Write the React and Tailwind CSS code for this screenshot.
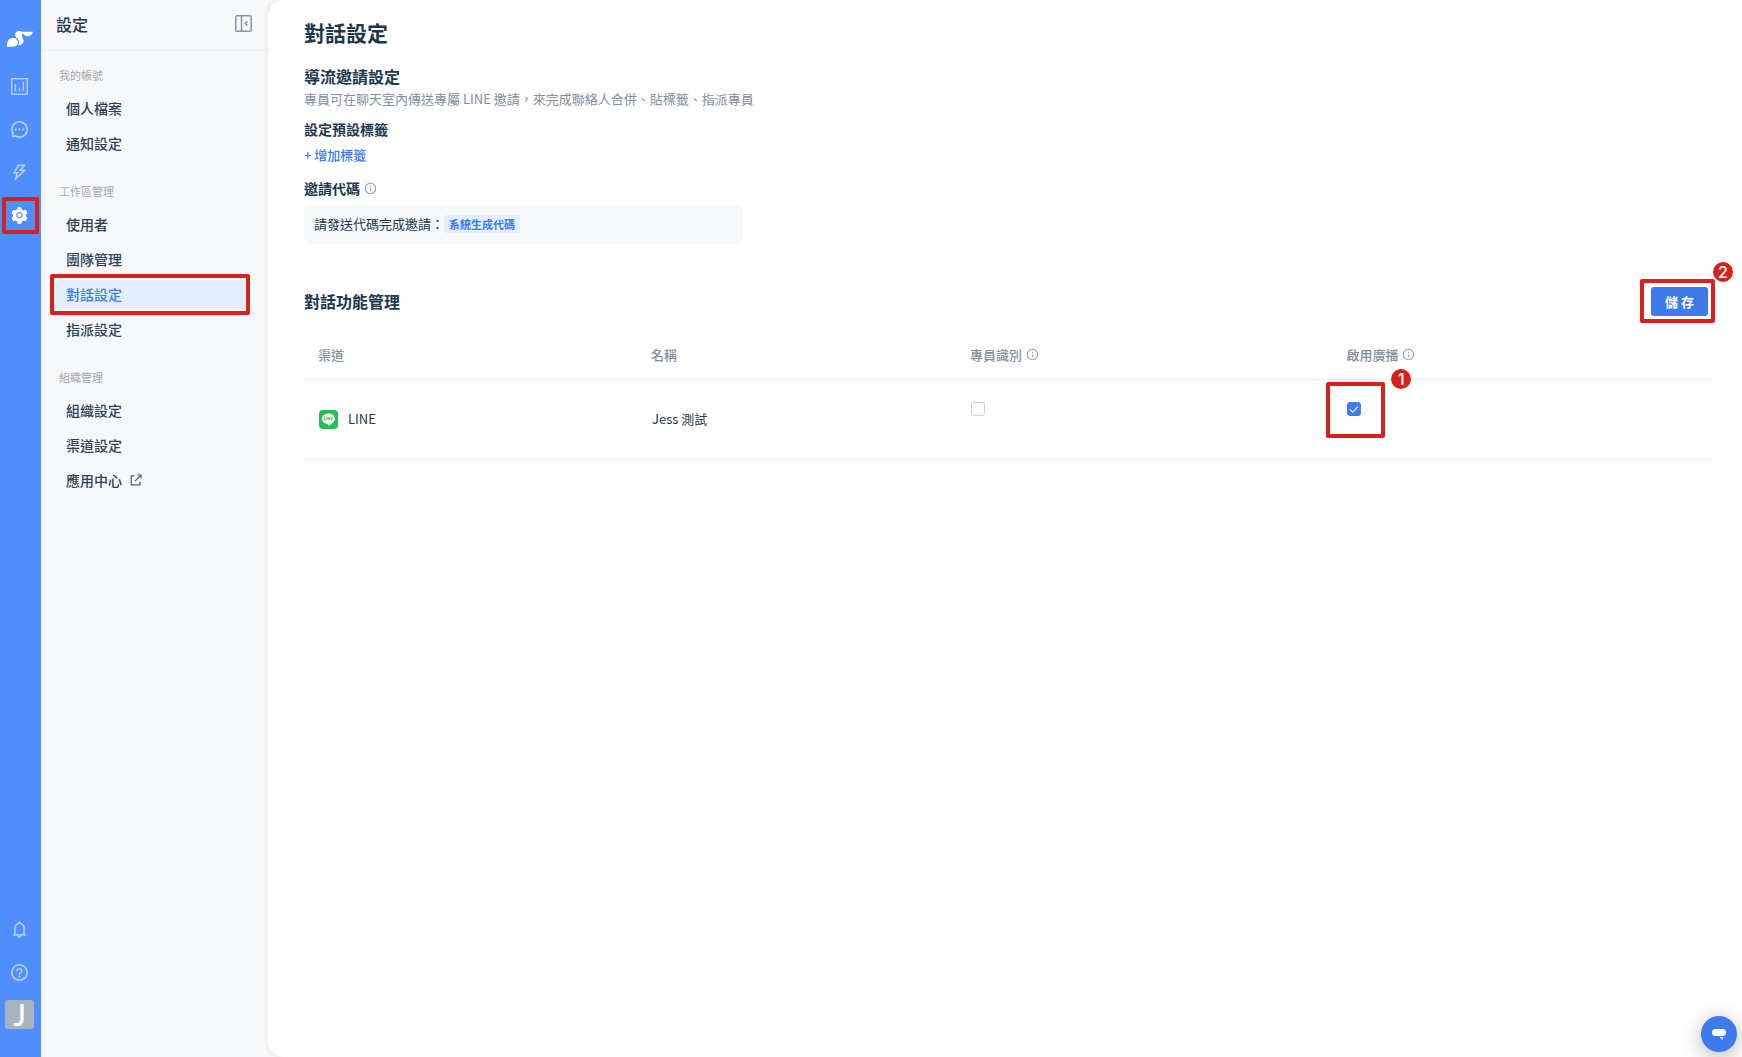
import { useState } from "react";
import {
  AiOutlineMessage,
  AiOutlineThunderbolt,
  AiFillSetting,
  AiOutlineBell,
  AiOutlineQuestionCircle,
  AiOutlineInfoCircle,
} from "react-icons/ai";

const navGroups = [
  {
    label: "我的帳號",
    items: [{ label: "個人檔案" }, { label: "通知設定" }],
  },
  {
    label: "工作區管理",
    items: [
      { label: "使用者" },
      { label: "團隊管理" },
      { label: "對話設定", active: true },
      { label: "指派設定" },
    ],
  },
  {
    label: "組織管理",
    items: [
      { label: "組織設定" },
      { label: "渠道設定" },
      { label: "應用中心", external: true },
    ],
  },
];

function PelicanLogo() {
  return (
    <svg width="26" height="16" viewBox="0 0 78 48" fill="white" aria-hidden="true">
      <path d="M0 47C-1 32 5 21 18 20C27 20 33 28 33 35C32 43 24 47 14 47Z" />
      <path d="M25 14C23 5 30 0 37 0C42 0 46 2 48 4C46 8 44 12 45 17C46 21 50 25 50 31C49 38 43 43 33 43C37 36 37 28 32 23C28 20 26 18 25 14Z" />
      <path d="M46 2.500L78 2.500C76 11 69 16 61 16C53 15 47 10 46 2.500Z" />
    </svg>
  );
}

function ChartIcon() {
  return (
    <svg width="17" height="17" viewBox="0 0 16 16" fill="none" stroke="currentColor" strokeWidth="1.3" aria-hidden="true">
      <rect x="0.7" y="0.7" width="14.6" height="14.6" />
      <path d="M4.2 5.800v6.600M8 9.200v3.200M11.700 3.600v8.800" />
    </svg>
  );
}

function CollapseIcon() {
  return (
    <svg width="17" height="17" viewBox="0 0 17 17" fill="none" stroke="#8696a7" strokeWidth="1.5" aria-hidden="true">
      <rect x="0.8" y="0.8" width="15.4" height="15.4" rx="1" />
      <path d="M6.5 1v15" />
      <path d="M12.4 6.3L10.2 8.5L12.4 10.7" strokeWidth="1.7" />
    </svg>
  );
}

function ExternalIcon() {
  return (
    <svg width="12" height="12" viewBox="0 0 12 12" fill="none" stroke="#4b5e72" strokeWidth="1.2" className="mb-0.5" aria-hidden="true">
      <path d="M4.6 1.9H1.3v8.9h8.6V7.4" />
      <path d="M5 7.2L10.6 1.4M7.4 1h3.6v3.6" />
    </svg>
  );
}

function LineLogo() {
  return (
    <svg width="19" height="19" viewBox="0 0 38 38" aria-hidden="true">
      <rect width="38" height="38" rx="8" fill="#22bf54" />
      <path
        fill="white"
        d="M19 7C11.800 7 6 11.700 6 17.500C6 22.700 10.600 27 16.800 27.900C18.300 28.200 18 29.300 17.800 31.500C19 32 32 24.800 32 17.500C32 11.700 26.200 7 19 7Z"
      />
      <path d="M11 14.500V20H13.500M15.500 14.500V20M18 20V14.500L21.500 20V14.500M27 14.500H24.200V20H27M24.200 17.200H26.600" fill="none" stroke="#22bf54" strokeWidth="1.500" />
    </svg>
  );
}

function RailButton({ label, children }) {
  return (
    <button type="button" aria-label={label} className="flex h-[43px] w-full items-center justify-center text-[#b3d3ff]">
      {children}
    </button>
  );
}

function Marker({ children, className }) {
  return (
    <span
      className={`absolute flex size-5 items-center justify-center rounded-full bg-[#d6221b] font-['Inter',sans-serif] text-base leading-5 font-medium text-white ${className}`}
    >
      {children}
    </span>
  );
}

function Check({ label, defaultChecked }) {
  const [checked, setChecked] = useState(defaultChecked);
  return (
    <span className="relative block size-[14px]">
      <input
        type="checkbox"
        aria-label={label}
        checked={checked}
        onChange={(e) => setChecked(e.target.checked)}
        className="block size-[14px] appearance-none rounded-[3px] border border-[#d0d0d0] bg-white checked:border-[#3e7aea] checked:bg-[#3e7aea]"
      />
      {checked && (
        <svg className="pointer-events-none absolute inset-0" width="14" height="14" viewBox="0 0 14 14" fill="none" stroke="white" strokeWidth="1.1" aria-hidden="true">
          <path d="M2.800 7.400L5.700 10.300L11 4.700" />
        </svg>
      )}
    </span>
  );
}

function Rail() {
  return (
    <nav aria-label="主選單" className="flex w-[41px] shrink-0 flex-col bg-[#508ffb] pr-0.5">
      <div className="flex h-[65px] items-center justify-center pt-3">
        <PelicanLogo />
      </div>
      <RailButton label="報表"><ChartIcon /></RailButton>
      <RailButton label="聊天"><AiOutlineMessage size={19} strokeWidth={16} /></RailButton>
      <RailButton label="自動化"><AiOutlineThunderbolt size={19} strokeWidth={16} /></RailButton>
      <div className="relative">
        <RailButton label="設定"><AiFillSetting size={19} color="white" /></RailButton>
        <span className="pointer-events-none absolute inset-y-[3px] right-0 left-0.5 rounded-[2px] border-4 border-[#d6221b]" />
      </div>
      <div className="mt-auto pb-7">
        <RailButton label="通知"><AiOutlineBell size={19} strokeWidth={16} /></RailButton>
        <RailButton label="說明"><AiOutlineQuestionCircle size={19} strokeWidth={16} /></RailButton>
        <button type="button" aria-label="帳號" className="mx-auto mt-1.5 flex size-[29px] items-center justify-center rounded-[3px] bg-[#a6b4c0] font-['Lato',sans-serif] text-[30px] leading-[29px] font-medium text-white">
          J
        </button>
      </div>
    </nav>
  );
}

function Sidebar() {
  return (
    <aside className="w-[227px] shrink-0">
      <div className="flex h-[49px] items-center justify-between pr-4 pb-1 pl-[15px] pt-0.5 shadow-[0_1px_3px_rgba(0,0,0,0.05)]">
        <h2 className="text-base leading-6 font-medium">設定</h2>
        <button type="button" aria-label="收合側欄"><CollapseIcon /></button>
      </div>
      <div className="flex flex-col gap-6 pt-[17px] pr-5 pl-[15px]">
        {navGroups.map((group) => (
          <section key={group.label}>
            <h3 className="pl-[3px] text-[11px] leading-[18px] text-[#a5a8ab]">{group.label}</h3>
            <ul className="mt-2.5 flex flex-col gap-1.5">
              {group.items.map((item) => (
                <li key={item.label} className="relative">
                  <a
                    href="#"
                    className={`flex h-[29px] items-center gap-2 rounded-sm pl-2.5 text-[14px] font-medium ${
                      item.active ? "bg-[#e3effe] text-[#3e7aea]" : "text-[#2c4258]"
                    }`}
                  >
                    {item.label}
                    {item.external && <ExternalIcon />}
                  </a>
                  {item.active && (
                    <span className="pointer-events-none absolute -inset-y-1.5 -right-0.5 -left-1.5 rounded-[2px] border-4 border-[#d6221b]" />
                  )}
                </li>
              ))}
            </ul>
          </section>
        ))}
      </div>
    </aside>
  );
}

function InfoLabel({ children }) {
  return (
    <span className="flex items-center gap-1">
      {children}
      <AiOutlineInfoCircle size={13} color="#8696a7" />
    </span>
  );
}

export default function App() {
  return (
    <div className="flex min-h-screen bg-[#f7f8fa] font-['Noto_Sans_CJK_TC',sans-serif] text-[#21374d]">
      <Rail />
      <Sidebar />
      <main className="min-w-0 flex-1 rounded-l-2xl bg-white pr-[33px] pl-9 shadow-[-1px_0_5px_rgba(0,0,0,0.06)]">
        <h1 className="pt-4 text-[21px] leading-8 font-bold">對話設定</h1>

        <section className="mt-4">
          <h2 className="text-base leading-6 font-bold">導流邀請設定</h2>
          <p className="text-[13px] leading-[22px] text-[#7e8fa0]">
            專員可在聊天室內傳送專屬 LINE 邀請，來完成聯絡人合併、貼標籤、指派專員
          </p>
          <h3 className="mt-2 text-[14px] leading-[22px] font-bold">設定預設標籤</h3>
          <button type="button" className="mt-1 block text-[13px] leading-[22px] font-medium text-[#3e7aea]">
            + 增加標籤
          </button>
          <h3 className="mt-[11px] text-[14px] leading-[22px] font-bold">
            <InfoLabel>邀請代碼</InfoLabel>
          </h3>
          <div className="mt-1.5 flex h-[39px] max-w-[439px] items-center rounded-md bg-[#f7f8fa] pb-0.5 pl-2.5 text-[13px]">
            請發送代碼完成邀請：
            <span className="rounded-[3px] bg-[#e3effe] px-[5px] text-[11px] leading-[18px] font-bold text-[#3e7aea]">系統生成代碼</span>
          </div>
        </section>

        <section className="mt-[43px]">
          <div className="flex items-center justify-between pr-px">
            <h2 className="pb-0.5 text-base leading-6 font-bold">對話功能管理</h2>
            <div className="relative">
              <button type="button" className="block h-[29px] w-[57px] rounded-[3px] bg-[#3e7aea] text-[13px] font-bold text-white">
                儲 存
              </button>
              <span className="pointer-events-none absolute -top-2 -right-[7px] -bottom-[7px] -left-[11px] rounded-[2px] border-4 border-[#d6221b]" />
              <Marker className="-top-[25px] -right-[25px]">2</Marker>
            </div>
          </div>

          <table className="mt-3.5 w-full table-fixed border-collapse text-left text-[13px]">
            <colgroup>
              <col className="w-[23.7%]" />
              <col className="w-[22.7%]" />
              <col className="w-[26.8%]" />
              <col className="w-[26.8%]" />
            </colgroup>
            <thead>
              <tr className="h-[49px] border-b border-[#ececec] text-[#7e8fa0]">
                <th scope="col" className="px-3.5 font-medium">渠道</th>
                <th scope="col" className="px-3.5 font-medium">名稱</th>
                <th scope="col" className="px-3.5 font-medium"><InfoLabel>專員識別</InfoLabel></th>
                <th scope="col" className="px-3.5 font-medium"><InfoLabel>啟用廣播</InfoLabel></th>
              </tr>
            </thead>
            <tbody>
              <tr className="h-20 border-b border-[#ececec]">
                <td className="px-[15px]">
                  <span className="flex items-center gap-2.5">
                    <LineLogo />
                    LINE
                  </span>
                </td>
                <td className="px-[15px]">Jess 測試</td>
                <td className="px-[15px] pt-[22px] align-top">
                  <Check label="專員識別" defaultChecked={false} />
                </td>
                <td className="px-[15px] pt-[22px] align-top">
                  <div className="relative w-[14px]">
                    <Check label="啟用廣播" defaultChecked />
                    <span className="pointer-events-none absolute -top-5 -left-[21px] h-14 w-[59px] rounded-[2px] border-4 border-[#d6221b]" />
                    <Marker className="-top-[33px] left-11">1</Marker>
                  </div>
                </td>
              </tr>
            </tbody>
          </table>
        </section>
      </main>

      <button
        type="button"
        aria-label="開啟客服對話"
        className="fixed right-[5px] bottom-[5px] flex size-9 items-center justify-center rounded-full bg-[#3e7aea] shadow-[0_4px_20px_rgba(0,0,0,0.3)]"
      >
        <svg width="14" height="12" viewBox="0 0 14 12" fill="white" aria-hidden="true">
          <path d="M3.500 1h7a3.500 3.500 0 0 1 0 7h-7a3.500 3.500 0 0 1 0-7Z" />
          <path d="M8 9h2.700v2.700C9.600 11.400 8.500 10.400 8 9Z" />
        </svg>
      </button>
    </div>
  );
}
